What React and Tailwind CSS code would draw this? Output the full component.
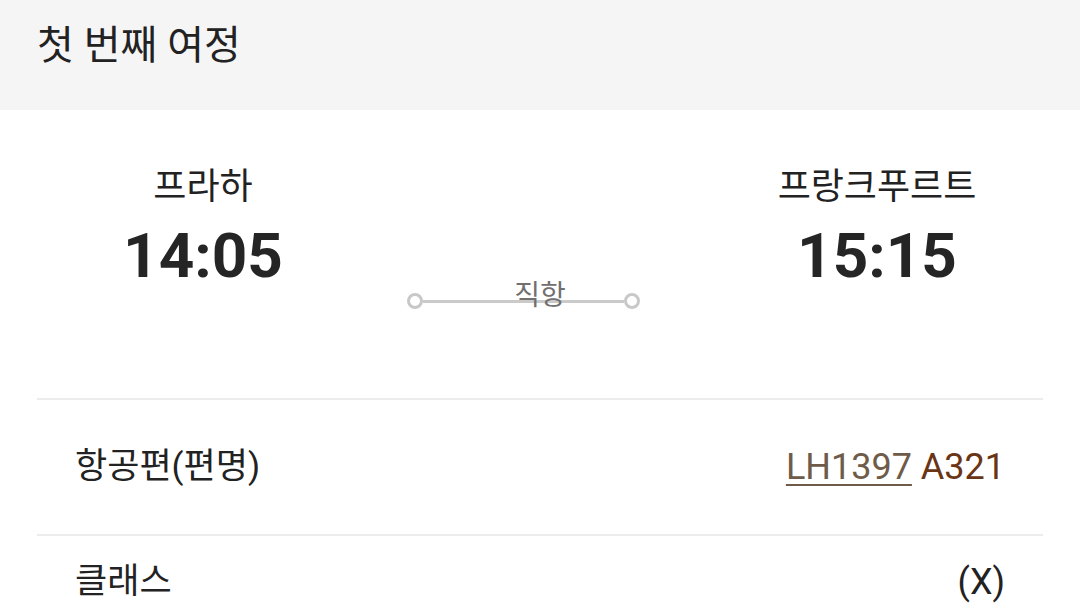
import React from "react";

const Endpoint = ({ city, time }) => (
  <div className="w-[332px] flex flex-col items-center pt-[56px]">
    <span className="text-[36px] leading-[42px] text-[#222]">{city}</span>
    <span className="mt-[17px] text-[62px] leading-[62px] font-bold text-[#252525]">
      {time}
    </span>
  </div>
);

const Dot = () => (
  <span className="w-[16px] h-[16px] rounded-full border-[3px] border-[#c8c8c8] bg-white shrink-0" />
);

const InfoRow = ({ label, className, children }) => (
  <div
    className={`border-t-2 border-[#ececec] flex justify-between px-[38px] ${className}`}
  >
    <span className="text-[35px] leading-[52px] text-[#222]">{label}</span>
    <div className="text-[36px] leading-[52px]">{children}</div>
  </div>
);

export default function App() {
  return (
    <div
      className="w-[1080px] h-[614px] overflow-hidden bg-white"
      style={{ fontFamily: 'Roboto, "Noto Sans CJK KR", sans-serif' }}
    >
      {/* header */}
      <div className="h-[110px] bg-[#f5f5f5] pl-[37px] pt-[17px]">
        <h1 className="text-[40px] leading-[58px] text-[#222]">첫 번째 여정</h1>
      </div>

      <div className="px-[37px]">
        {/* route */}
        <div className="h-[288px] flex">
          <Endpoint city="프라하" time="14:05" />
          <div className="w-[342px] pt-[183px]">
            <div className="relative ml-[38px] w-[233px] h-[16px] flex items-center">
              <Dot />
              <span className="flex-1 h-[3px] bg-[#cacaca]" />
              <Dot />
              <span className="absolute left-[-38px] w-[342px] top-[-16px] text-center text-[28px] leading-[38px] text-[#707070]">
                직항
              </span>
            </div>
          </div>
          <Endpoint city="프랑크푸르트" time="15:15" />
        </div>

        <InfoRow label="항공편(편명)" className="h-[136px] items-center">
          <span className="text-[#6e5b4a] underline decoration-2 underline-offset-[5px]">
            LH1397
          </span>{" "}
          <span className="text-[#6a3514]">A321</span>
        </InfoRow>
        <InfoRow label="클래스" className="h-[136px] items-start pt-[20px]">
          <span className="text-[#222]">(X)</span>
        </InfoRow>
      </div>
    </div>
  );
}
